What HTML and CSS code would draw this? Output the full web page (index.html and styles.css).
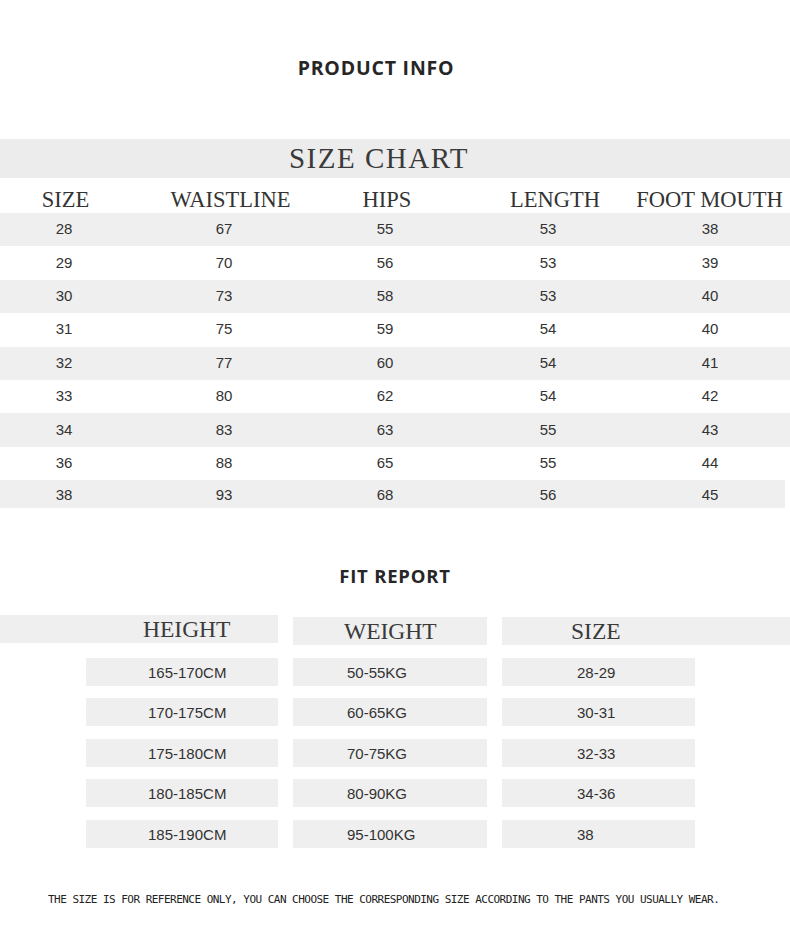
FILE: index.html
```html
<!DOCTYPE html>
<html>
<head>
<meta charset="utf-8">
<link rel="stylesheet" href="styles.css">
</head>
<body>
<div class="page">
  <h1 class="title">PRODUCT INFO</h1>

  <div class="chart-band">SIZE CHART</div>
  <div class="chart-head">
    <div class="hcell"><span>SIZE</span></div>
    <div class="hcell"><span>WAISTLINE</span></div>
    <div class="hcell"><span>HIPS</span></div>
    <div class="hcell"><span>LENGTH</span></div>
    <div class="hcell"><span>FOOT MOUTH</span></div>
  </div>
  <div class="rows">
    <div class="row gray"><span>28</span><span>67</span><span>55</span><span>53</span><span>38</span></div>
    <div class="row"><span>29</span><span>70</span><span>56</span><span>53</span><span>39</span></div>
    <div class="row gray"><span>30</span><span>73</span><span>58</span><span>53</span><span>40</span></div>
    <div class="row"><span>31</span><span>75</span><span>59</span><span>54</span><span>40</span></div>
    <div class="row gray"><span>32</span><span>77</span><span>60</span><span>54</span><span>41</span></div>
    <div class="row"><span>33</span><span>80</span><span>62</span><span>54</span><span>42</span></div>
    <div class="row gray"><span>34</span><span>83</span><span>63</span><span>55</span><span>43</span></div>
    <div class="row"><span>36</span><span>88</span><span>65</span><span>55</span><span>44</span></div>
    <div class="row gray last"><span>38</span><span>93</span><span>68</span><span>56</span><span>45</span></div>
  </div>

  <h2 class="title fit-title">FIT REPORT</h2>

  <div class="fit">
    <div class="fhead c1">HEIGHT</div>
    <div class="fhead c2">WEIGHT</div>
    <div class="fhead c3">SIZE</div>

    <div class="fbox c1">165-170CM</div>
    <div class="fbox c2">50-55KG</div>
    <div class="fbox c3">28-29</div>

    <div class="fbox c1">170-175CM</div>
    <div class="fbox c2">60-65KG</div>
    <div class="fbox c3">30-31</div>

    <div class="fbox c1">175-180CM</div>
    <div class="fbox c2">70-75KG</div>
    <div class="fbox c3">32-33</div>

    <div class="fbox c1">180-185CM</div>
    <div class="fbox c2">80-90KG</div>
    <div class="fbox c3">34-36</div>

    <div class="fbox c1">185-190CM</div>
    <div class="fbox c2">95-100KG</div>
    <div class="fbox c3">38</div>
  </div>

  <p class="note">THE SIZE IS FOR REFERENCE ONLY, YOU CAN CHOOSE THE CORRESPONDING SIZE ACCORDING TO THE PANTS YOU USUALLY WEAR.</p>
</div>
</body>
</html>
```

FILE: styles.css
```css
html, body {
  margin: 0;
  padding: 0;
  background: #ffffff;
}

.page {
  width: 790px;
  overflow: hidden;
  padding-top: 56px;
}

.title {
  margin: 0;
  font-family: "Open Sans", "Liberation Sans", sans-serif;
  font-weight: 700;
  font-size: 19.5px;
  line-height: 24px;
  letter-spacing: 0.8px;
  color: #262626;
  text-align: center;
  padding-right: 38px;
}

.chart-band {
  margin-top: 59px;
  height: 39px;
  background: #ececec;
  font-family: "Liberation Serif", serif;
  font-size: 29px;
  letter-spacing: 1.5px;
  line-height: 39px;
  color: #3a3a3a;
  text-align: center;
  padding-right: 32px;
}

.chart-head {
  height: 35px;
  display: grid;
  grid-template-columns: 131px 199px 114px 222px 87px;
  font-family: "Liberation Serif", serif;
  font-size: 22.5px;
  line-height: 35px;
  color: #333;
}

.hcell {
  display: flex;
  justify-content: center;
  white-space: nowrap;
  padding-top: 4px;
}

.rows {
  display: flex;
  flex-direction: column;
}

.row {
  height: 33.4px;
  display: grid;
  grid-template-columns: 128px 192px 130px 196px 128px;
  align-items: center;
  font-family: "Liberation Sans", Arial, sans-serif;
  font-size: 15px;
  color: #333;
  padding-bottom: 2px;
  box-sizing: border-box;
}

.row span {
  text-align: center;
}

.row.gray {
  background: #efefef;
}

.row.last {
  height: 28px;
  width: 785px;
  padding-bottom: 0;
}

.fit-title {
  margin-top: 56px;
  font-size: 18.5px;
  padding-right: 0;
}

.fit {
  margin-top: 27px;
  display: grid;
  grid-template-columns: 278px 194px 288px;
  column-gap: 15px;
  row-gap: 12.5px;
  grid-auto-rows: 28px;
  grid-template-rows: 30px;
}

.fhead {
  height: 28px;
  background: #efefef;
  font-family: "Liberation Serif", serif;
  font-size: 23.5px;
  line-height: 28px;
  color: #3a3a3a;
  white-space: nowrap;
}

.fhead.c1 {
  align-self: start;
  padding-left: 143px;
}

.fhead.c2 {
  align-self: end;
  padding-left: 51px;
}

.fhead.c3 {
  align-self: end;
  padding-left: 69px;
}

.fbox {
  height: 28px;
  background: #efefef;
  font-family: "Liberation Sans", Arial, sans-serif;
  font-size: 15px;
  line-height: 29px;
  color: #333;
  white-space: nowrap;
}

.fbox.c1 {
  margin-left: 86px;
  padding-left: 62px;
}

.fbox.c2 {
  padding-left: 54px;
}

.fbox.c3 {
  width: 193px;
  box-sizing: border-box;
  padding-left: 75px;
}

.note {
  margin: 45px 0 0 0;
  padding-left: 48px;
  font-family: "DejaVu Sans Mono", "Liberation Mono", monospace;
  font-size: 11px;
  line-height: 14px;
  letter-spacing: -0.52px;
  color: #222;
  white-space: nowrap;
}
```
